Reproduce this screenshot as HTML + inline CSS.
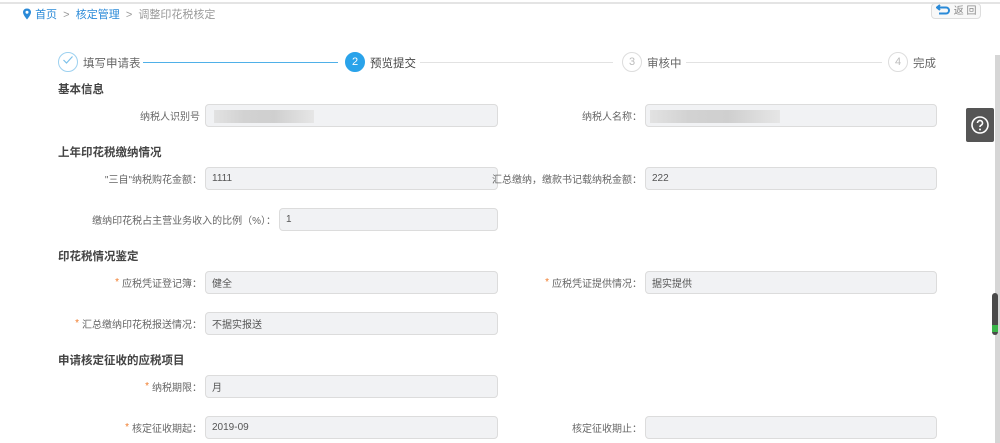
<!DOCTYPE html>
<html><head><meta charset="utf-8"><style>
*{margin:0;padding:0;box-sizing:border-box}
body{width:1000px;height:443px;overflow:hidden;background:#fff;font-family:"Liberation Sans","Noto Sans CJK SC",sans-serif;font-size:11px;color:#555;position:relative}
.a{position:absolute}
.topline{left:0;top:2px;width:1000px;height:2px;background:#e4e4e4}
.bc{left:22px;top:6px;font-size:11px;color:#999}
.bc .l{color:#2a8ad8}
.circ{width:20px;height:20px;border-radius:50%;border:1px solid #ddd;color:#bbb;text-align:center;line-height:18px;font-size:11px}
.st{font-size:11.5px;color:#666}
.h{left:58px;font-weight:bold;font-size:11.5px;color:#444}
.lab{text-align:right;font-size:10px;color:#666;height:23px;display:flex;align-items:center;justify-content:flex-end}
.in{height:23px;background:#f1f2f4;border:1px solid #dcdcdc;border-radius:4px;padding-left:6px;font-size:10px;color:#555;display:flex;align-items:center}
.s{color:#f07c2c;margin-right:3px}
.blur{background:linear-gradient(90deg,#e2e2e2,#d2d2d2 30%,#cfcfcf 60%,#e6e6e6);height:13px;top:5px}
</style></head><body>
<div class="a topline"></div>
<div class="a bc"><svg width="10" height="12" viewBox="0 0 10 12" style="vertical-align:-2px"><path d="M5 0.5C2.5 0.5 1 2.3 1 4.3 1 7 5 11.5 5 11.5S9 7 9 4.3C9 2.3 7.5 0.5 5 0.5Z" fill="#2a8ad8"/><circle cx="5" cy="4.3" r="1.5" fill="#fff"/></svg> <span class="l">首页</span> &nbsp;&gt;&nbsp; <span class="l">核定管理</span> &nbsp;&gt;&nbsp; 调整印花税核定</div>
<div class="a" style="left:931px;top:3px;width:50px;height:16px;border:1px solid #ddd;border-radius:4px;background:#f8f8f8;font-size:10px;color:#888;line-height:14px;padding-left:4px"><svg width="15" height="11" viewBox="0 0 15 11" style="vertical-align:-1px"><path d="M4 1 1 3.5 4 6M1.5 3.5H10a3 3 0 0 1 0 6H3" stroke="#2a8ad8" stroke-width="2" fill="none"/></svg> 返 回</div>
<div class="a" style="left:995px;top:55px;width:5px;height:388px;background:#d6d6d6"></div>
<div class="a" style="left:992px;top:293px;width:6px;height:42px;background:#4a4a4a;border-radius:3px"></div>
<div class="a" style="left:992px;top:325px;width:6px;height:7px;background:#3ab54a"></div>
<div class="a" style="left:966px;top:108px;width:28px;height:34px;background:#555;border-radius:2px"><svg width="28" height="34" viewBox="0 0 28 34"><circle cx="14" cy="17" r="8" stroke="#fff" stroke-width="1.6" fill="none"/><path d="M11.5 15a2.5 2.5 0 1 1 3.5 2.3c-.8.4-1 .9-1 1.7" stroke="#fff" stroke-width="1.6" fill="none"/><circle cx="14" cy="21.5" r="1" fill="#fff"/></svg></div>

<div class="a circ" style="left:58px;top:52px;border-color:#9dd1f0"><svg width="12" height="10" viewBox="0 0 12 10"><path d="M1.5 5 4.5 8 10.5 1.5" stroke="#7cc1ea" stroke-width="1.2" fill="none"/></svg></div>
<div class="a st" style="left:83px;top:55px">填写申请表</div>
<div class="a" style="left:143px;top:62px;width:195px;height:1px;background:#4fb0e8"></div>
<div class="a circ" style="left:345px;top:52px;background:#2aa3ea;border-color:#2aa3ea;color:#fff">2</div>
<div class="a st" style="left:370px;top:55px;color:#444">预览提交</div>
<div class="a" style="left:420px;top:62px;width:193px;height:1px;background:#e2e2e2"></div>
<div class="a circ" style="left:622px;top:52px">3</div>
<div class="a st" style="left:647px;top:55px">审核中</div>
<div class="a" style="left:686px;top:62px;width:196px;height:1px;background:#e2e2e2"></div>
<div class="a circ" style="left:888px;top:52px">4</div>
<div class="a st" style="left:913px;top:55px">完成</div>

<div class="a h" style="top:81px">基本信息</div>
<div class="a lab" style="left:80px;width:120px;top:104px">纳税人识别号</div>
<div class="a in" style="left:205px;top:104px;width:293px"><div class="a blur" style="left:8px;width:100px"></div></div>
<div class="a lab" style="left:520px;width:122px;top:104px">纳税人名称：</div>
<div class="a in" style="left:645px;top:104px;width:292px"><div class="a blur" style="left:4px;width:130px"></div></div>

<div class="a h" style="top:144px">上年印花税缴纳情况</div>
<div class="a lab" style="left:60px;width:142px;top:167px">"三自"纳税购花金额：</div>
<div class="a in" style="left:205px;top:167px;width:293px">1111</div>
<div class="a lab" style="left:480px;width:162px;top:167px">汇总缴纳，缴款书记载纳税金额：</div>
<div class="a in" style="left:645px;top:167px;width:292px">222</div>
<div class="a lab" style="left:60px;width:216px;top:208px">缴纳印花税占主营业务收入的比例（%）：</div>
<div class="a in" style="left:279px;top:208px;width:219px">1</div>

<div class="a h" style="top:248px">印花税情况鉴定</div>
<div class="a lab" style="left:60px;width:142px;top:271px"><span class="s">*</span>应税凭证登记簿：</div>
<div class="a in" style="left:205px;top:271px;width:293px">健全</div>
<div class="a lab" style="left:500px;width:142px;top:271px"><span class="s">*</span>应税凭证提供情况：</div>
<div class="a in" style="left:645px;top:271px;width:292px">据实提供</div>
<div class="a lab" style="left:60px;width:142px;top:312px"><span class="s">*</span>汇总缴纳印花税报送情况：</div>
<div class="a in" style="left:205px;top:312px;width:293px">不据实报送</div>

<div class="a h" style="top:352px">申请核定征收的应税项目</div>
<div class="a lab" style="left:60px;width:142px;top:375px"><span class="s">*</span>纳税期限：</div>
<div class="a in" style="left:205px;top:375px;width:293px">月</div>
<div class="a lab" style="left:60px;width:142px;top:416px"><span class="s">*</span>核定征收期起：</div>
<div class="a in" style="left:205px;top:416px;width:293px">2019-09</div>
<div class="a lab" style="left:500px;width:142px;top:416px">核定征收期止：</div>
<div class="a in" style="left:645px;top:416px;width:292px"></div>
</body></html>
